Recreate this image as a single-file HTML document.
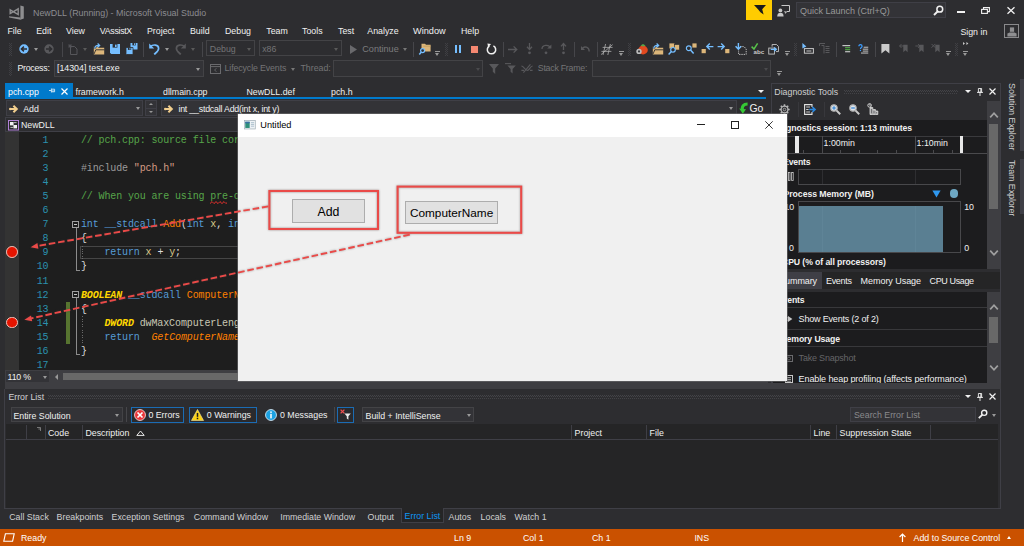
<!DOCTYPE html>
<html>
<head>
<meta charset="utf-8">
<title>NewDLL (Running) - Microsoft Visual Studio</title>
<style>
*{box-sizing:border-box;margin:0;padding:0}
html,body{width:1024px;height:546px;overflow:hidden;background:#2d2d30}
body{position:relative;font-family:"Liberation Sans",sans-serif;font-size:8.8px;line-height:12px;color:#f1f1f1}
.a{position:absolute}
.t{position:absolute;white-space:nowrap;line-height:12px;height:12px}
.g{color:#999}
.d{color:#6a6a6a}
.b{font-weight:bold}
.sep{position:absolute;width:1px;background:#46464a}
.grip{position:absolute;width:3px;opacity:.85;background:repeating-linear-gradient(#434347 0 1px,transparent 1px 2px) 0 0/1px 100% no-repeat,repeating-linear-gradient(transparent 0 1px,#434347 1px 2px) 1px 0/1px 100% no-repeat,repeating-linear-gradient(#434347 0 1px,transparent 1px 2px) 2px 0/1px 100% no-repeat}
.cb{position:absolute;background:#333337;border:1px solid #434346}
.cbd{position:absolute;background:#2d2d30;border:1px solid #434346}
.dd{position:absolute;width:0;height:0;border-left:2.5px solid transparent;border-right:2.5px solid transparent;border-top:3px solid #999}
.ddd{border-top-color:#5a5a5a}
.ddw{border-top-color:#f1f1f1;border-left-width:3px;border-right-width:3px;border-top-width:3.4px}
svg{position:absolute;overflow:visible}
.mono{font-family:"Liberation Mono",monospace;font-size:10px;letter-spacing:-0.12px;line-height:14.03px;white-space:pre;position:absolute}
.ln{color:#2b91af;text-align:right;width:30px;left:18.5px}
.cm{color:#57a64a}.kw{color:#569cd6}.st{color:#d69d85}.pp{color:#9b9b9b}.id{color:#dcdcdc}.fn{color:#ff8000}.ty{color:#ffd700;font-style:italic}.lv{color:#d7c88a}.fi{color:#ff8000;font-style:italic}
</style>
</head>
<body>

<!-- ================= TITLE BAR ================= -->
<div id="titlebar">
<svg style="left:9px;top:5px" width="15" height="15" viewBox="0 0 15 15"><path d="M11.4 0.4 L14.8 1.6 V13.4 L11.4 14.8 Z" fill="#8e8e90"/><path d="M0 11.2 L11.6 12.4 V14.8 L0.2 12.4 Z" fill="#8e8e90"/><path d="M1.2 4.8 L9.2 9.6 V3.8 L1.2 8.6 Z" fill="none" stroke="#8e8e90" stroke-width="1.4" stroke-linejoin="miter"/></svg>
<span class="t" style="left:33px;top:7.4px;font-size:8.9px;color:#8c8c90">NewDLL (Running) - Microsoft Visual Studio</span>
<div class="a" style="left:746px;top:0;width:26px;height:19.5px;background:#ffcc00"></div>
<svg style="left:753.5px;top:5px" width="12" height="10" viewBox="0 0 12 10"><path d="M0 0 H12 L8.2 4.2 L9.6 9.6 L6.4 7.2 L4.2 4.6 Z" fill="#1b1b1c"/></svg>
<svg style="left:777px;top:5px" width="13" height="12" viewBox="0 0 13 12"><path d="M4.5 0.5 H12.5 V6.5 H10 L8.3 8.2 V6.5 H7.5" fill="none" stroke="#c8c8c8" stroke-width="1"/><circle cx="3.4" cy="5.4" r="1.9" fill="#c8c8c8"/><path d="M0.2 11.5 C0.2 8.6 1.6 7.8 3.4 7.8 C5.2 7.8 6.6 8.6 6.6 11.5 Z" fill="#c8c8c8"/></svg>
<div class="a" style="left:796px;top:1.5px;width:150px;height:16px;background:#333337;border:1px solid #3f3f46"></div>
<span class="t g" style="left:800px;top:4.8px;font-size:9px">Quick Launch (Ctrl+Q)</span>
<svg style="left:933px;top:4.5px" width="11" height="11" viewBox="0 0 11 11"><circle cx="6.8" cy="4.2" r="2.9" fill="none" stroke="#f1f1f1" stroke-width="1.5"/><path d="M4.8 6.3 L1 10" stroke="#f1f1f1" stroke-width="1.9"/></svg>
<div class="a" style="left:957px;top:11.4px;width:7.5px;height:2px;background:#f1f1f1"></div>
<svg style="left:981px;top:7.4px" width="9" height="7" viewBox="0 0 9 7"><path d="M2.5 2 V0.6 H8.4 V4.6 H6.5" fill="none" stroke="#f1f1f1" stroke-width="1.1"/><rect x="0.6" y="2.4" width="5.8" height="4" fill="none" stroke="#f1f1f1" stroke-width="1.1"/></svg>
<svg style="left:1007px;top:7px" width="8" height="7" viewBox="0 0 8 7"><path d="M0.5 0.3 L7.5 6.7 M7.5 0.3 L0.5 6.7" stroke="#f1f1f1" stroke-width="1.3"/></svg>
</div>

<!-- ================= MENU ================= -->
<div id="menu">
<span class="t" style="left:7.5px;top:24.8px">File</span>
<span class="t" style="left:36.2px;top:24.8px">Edit</span>
<span class="t" style="left:66px;top:24.8px">View</span>
<span class="t" style="left:99.8px;top:24.8px;letter-spacing:-0.3px">VAssistX</span>
<span class="t" style="left:147px;top:24.8px">Project</span>
<span class="t" style="left:190px;top:24.8px">Build</span>
<span class="t" style="left:225px;top:24.8px">Debug</span>
<span class="t" style="left:266.3px;top:24.8px">Team</span>
<span class="t" style="left:302px;top:24.8px">Tools</span>
<span class="t" style="left:338px;top:24.8px">Test</span>
<span class="t" style="left:367.3px;top:24.8px">Analyze</span>
<span class="t" style="left:413px;top:24.8px;font-size:9.2px">Window</span>
<span class="t" style="left:461px;top:24.8px">Help</span>
<span class="t" style="left:960.4px;top:25.5px">Sign in</span>
<div class="a" style="left:1004px;top:24px;width:15px;height:14px;border:1px solid #8a8a8c;background:#2d2d30"></div>
<svg style="left:1006.5px;top:26.5px" width="10" height="10" viewBox="0 0 10 10"><rect x="2.9" y="0.4" width="4.2" height="4.4" fill="#8f8f91"/><path d="M0.4 9.6 V6.4 L2.6 5.4 H7.4 L9.6 6.4 V9.6 Z" fill="#8f8f91"/></svg>
</div>

<!-- ================= TOOLBAR ROW 1 ================= -->
<div id="tb1" class="a" style="left:0;top:0.8px;width:1024px;height:0">
<div class="grip" style="left:8.6px;top:42px;height:13px"></div>
<!-- back -->
<svg style="left:19px;top:43.2px" width="10" height="10" viewBox="0 0 10 10"><circle cx="5" cy="5" r="4.7" fill="#75beff"/><path d="M8 5 H2.8 M4.9 2.6 L2.4 5 L4.9 7.4" stroke="#2d2d30" stroke-width="1.5" fill="none"/></svg>
<div class="dd" style="left:34px;top:47.5px"></div>
<svg style="left:44.4px;top:43.2px" width="10" height="10" viewBox="0 0 10 10"><circle cx="5" cy="5" r="4.7" fill="#58585b"/><path d="M2 5 H7.2 M5.1 2.6 L7.6 5 L5.1 7.4" stroke="#2d2d30" stroke-width="1.5" fill="none"/></svg>
<div class="sep" style="left:61.5px;top:41px;height:15px"></div>
<!-- new item (disabled) -->
<svg style="left:67.5px;top:43px" width="10" height="11" viewBox="0 0 10 11"><path d="M2.5 2.5 H6.5 L9 5 V10.5 H2.5 Z" fill="none" stroke="#56565a" stroke-width="1"/><path d="M2 0 V4 M0 2 H4 M0.6 0.6 L3.4 3.4 M3.4 0.6 L0.6 3.4" stroke="#56565a" stroke-width="0.8"/></svg>
<div class="dd ddd" style="left:82.5px;top:47.5px"></div>
<!-- open folder -->
<svg style="left:92.5px;top:42px" width="12" height="12" viewBox="0 0 12 12"><path d="M0.8 3.6 H4.4 L5.4 4.8 H11.2 V11.4 H0.8 Z" fill="#dcb67a"/><path d="M1 11 L2.8 6.8 H11.4" fill="none" stroke="#2d2d30" stroke-width="0.9"/><path d="M1.8 5.6 C1.8 3 3.6 2.2 6 2.4" stroke="#2d2d30" stroke-width="2.6" fill="none"/><path d="M1.8 5.6 C1.8 3 3.6 2.2 6 2.4 M4.6 0.6 L6.6 2.4 L4.6 4.2" stroke="#75beff" stroke-width="1.3" fill="none"/></svg>
<!-- save -->
<svg style="left:110px;top:43.2px" width="10" height="10" viewBox="0 0 10 10"><path d="M0 0 H10 V10 H1.2 L0 8.8 Z" fill="#75beff"/><rect x="2.6" y="0" width="4.8" height="3.6" fill="#2d2d30"/><rect x="5" y="0.6" width="1.6" height="2.4" fill="#75beff"/></svg>
<!-- save all -->
<svg style="left:125.8px;top:42.3px" width="11.5" height="11.5" viewBox="0 0 11.5 11.5"><path d="M4.5 0 H11.5 V6.5 H5.3 L4.5 5.7 Z" fill="#75beff"/><rect x="6.4" y="0" width="3.3" height="2.4" fill="#2d2d30"/><rect x="8" y="0.3" width="1" height="1.6" fill="#75beff"/><path d="M0 4.5 H7 V11.5 H0.8 L0 10.7 Z" fill="#75beff" stroke="#2d2d30" stroke-width="0.8"/><rect x="1.9" y="4.5" width="3.3" height="2.4" fill="#2d2d30"/><rect x="3.5" y="4.9" width="1" height="1.6" fill="#75beff"/></svg>
<div class="sep" style="left:142.5px;top:41px;height:15px"></div>
<!-- undo -->
<svg style="left:148.5px;top:42.5px" width="11" height="12" viewBox="0 0 11 12"><path d="M1.4 3.6 C4 1.2 9.6 1.4 9.6 5.4 C9.6 8 7 9.6 5.2 11.4" fill="none" stroke="#75beff" stroke-width="1.7"/><path d="M0.2 0.4 V5.4 H5.2 Z" fill="#75beff"/></svg>
<div class="dd" style="left:164.5px;top:47.5px"></div>
<svg style="left:175px;top:42.5px" width="11" height="12" viewBox="0 0 11 12"><path d="M9.6 3.6 C7 1.2 1.4 1.4 1.4 5.4 C1.4 8 4 9.6 5.8 11.4" fill="none" stroke="#58585b" stroke-width="1.7"/><path d="M10.8 0.4 V5.4 H5.8 Z" fill="#58585b"/></svg>
<div class="dd ddd" style="left:190.5px;top:47.5px"></div>
<div class="sep" style="left:202px;top:41px;height:15px"></div>
<div class="cbd" style="left:206px;top:39.7px;width:48.5px;height:16px"></div>
<span class="t d" style="left:209.8px;top:41.9px;color:#747476">Debug</span>
<div class="dd ddd" style="left:246.5px;top:47.5px"></div>
<div class="cbd" style="left:259px;top:39.7px;width:82.5px;height:16px"></div>
<span class="t d" style="left:262.2px;top:41.9px;color:#747476">x86</span>
<div class="dd ddd" style="left:333.5px;top:47.5px"></div>
<svg style="left:349.5px;top:44px" width="7" height="9" viewBox="0 0 7 9"><path d="M0 0 L7 4.5 L0 9 Z" fill="#69696c"/></svg>
<span class="t" style="left:362.3px;top:41.9px;color:#7c7c7e;font-size:9.1px">Continue</span>
<div class="dd ddd" style="left:402.8px;top:47.5px;border-top-color:#777"></div>
<div class="sep" style="left:413.3px;top:41px;height:15px"></div>
<!-- folder search -->
<svg style="left:418.5px;top:42.2px" width="12" height="12" viewBox="0 0 12 12"><path d="M2.5 0.8 H6 L7 1.8 H11.6 V8.6 H2.5 Z" fill="#dcb67a"/><path d="M4.2 3.2 H11.6" stroke="#c09a5c" stroke-width="0.8"/><circle cx="3.6" cy="7.6" r="2" fill="#2d2d30" stroke="#75beff" stroke-width="1.2"/><path d="M2.2 9.2 L0.3 11.5" stroke="#75beff" stroke-width="1.5"/></svg>
<div class="a" style="left:435px;top:50.6px;width:5px;height:1px;background:#999"></div><div class="dd" style="left:435px;top:52.6px"></div>
<div class="grip" style="left:444.8px;top:42px;height:13px"></div>
<!-- pause stop restart -->
<div class="a" style="left:455px;top:44.6px;width:2.2px;height:7.6px;background:#75beff"></div>
<div class="a" style="left:459px;top:44.6px;width:2.2px;height:7.6px;background:#75beff"></div>
<div class="a" style="left:471px;top:45.2px;width:7px;height:7px;background:#f48771"></div>
<svg style="left:485.5px;top:42.5px" width="11" height="12" viewBox="0 0 11 12"><path d="M3.4 3 A4.2 4.2 0 1 0 7.4 2.9" fill="none" stroke="#f1f1f1" stroke-width="1.5"/><path d="M1.4 0.6 L5 1 L2.2 4.4 Z" fill="#f1f1f1"/></svg>
<div class="sep" style="left:502.5px;top:41px;height:15px"></div>
<!-- step icons (disabled) -->
<svg style="left:508px;top:44px" width="10" height="9" viewBox="0 0 10 9"><path d="M0 4.5 H8.6 M5.6 1.4 L8.8 4.5 L5.6 7.6" stroke="#58585b" stroke-width="1.3" fill="none"/></svg>
<svg style="left:526.3px;top:42.5px" width="7" height="12" viewBox="0 0 7 12"><path d="M3.5 0 V6 M1 3.8 L3.5 6.6 L6 3.8" stroke="#58585b" stroke-width="1.3" fill="none"/><circle cx="3.5" cy="9.8" r="1.4" fill="#58585b"/></svg>
<svg style="left:540.5px;top:42.5px" width="11" height="12" viewBox="0 0 11 12"><path d="M1 6 C1 1.6 8 1 9.4 5" stroke="#58585b" stroke-width="1.3" fill="none"/><path d="M10.4 1.4 V5.6 H6.2 Z" fill="#58585b"/><circle cx="5" cy="9.8" r="1.4" fill="#58585b"/></svg>
<svg style="left:559.5px;top:42.5px" width="7" height="12" viewBox="0 0 7 12"><path d="M3.5 7 V1 M1 3.4 L3.5 0.6 L6 3.4" stroke="#58585b" stroke-width="1.3" fill="none"/><circle cx="3.5" cy="9.8" r="1.4" fill="#58585b"/></svg>
<div class="sep" style="left:574px;top:41px;height:15px"></div>
<svg style="left:580.5px;top:44.5px" width="9" height="8" viewBox="0 0 9 8"><path d="M1.6 3.4 C3 1 8.2 1.6 8.2 6.6" stroke="#58585b" stroke-width="1.3" fill="none"/><path d="M0 1 V5 H4 Z" fill="#58585b"/></svg>
<div class="sep" style="left:597.2px;top:41px;height:15px"></div>
<!-- hash icon -->
<svg style="left:601px;top:43px" width="12" height="11" viewBox="0 0 12 11"><path d="M4.6 0 L2 11 M9.4 0 L6.8 11 M1.6 3.4 H11.6 M0.4 7.4 H10.4 M0 10.6 L11.6 0.6" stroke="#b4b4b4" stroke-width="0.75" fill="none"/></svg>
<div class="a" style="left:618.7px;top:50.6px;width:5px;height:1px;background:#999"></div><div class="dd" style="left:618.7px;top:52.6px"></div>
<div class="grip" style="left:628.2px;top:42px;height:13px"></div>
<!-- tomato -->
<svg style="left:636px;top:42.2px" width="12" height="12" viewBox="0 0 12 12"><ellipse cx="7" cy="7" rx="4.8" ry="4.4" fill="#e2491f"/><path d="M4.5 2.6 L7 1 L9.6 2.4 L7.2 3.6 Z" fill="#57a64a"/><circle cx="3" cy="8.4" r="2.7" fill="#bdbdbd"/><circle cx="3" cy="8.4" r="1.1" fill="#3a3a3d"/></svg>
<!-- open folder 2 -->
<svg style="left:652.3px;top:42px" width="12" height="12" viewBox="0 0 12 12"><path d="M0.8 3.6 H4.4 L5.4 4.8 H11.2 V11.4 H0.8 Z" fill="#dcb67a"/><path d="M1 11 L2.8 6.8 H11.4" fill="none" stroke="#2d2d30" stroke-width="0.9"/><path d="M1.8 5.6 C1.8 3 3.6 2.2 6 2.4" stroke="#2d2d30" stroke-width="2.6" fill="none"/><path d="M1.8 5.6 C1.8 3 3.6 2.2 6 2.4 M4.6 0.6 L6.6 2.4 L4.6 4.2" stroke="#75beff" stroke-width="1.3" fill="none"/></svg>
<!-- find in files -->
<svg style="left:668px;top:42px" width="12" height="12" viewBox="0 0 12 12"><rect x="1.4" y="0.4" width="5" height="5" fill="#dcb67a"/><rect x="6.4" y="1.6" width="5" height="5.4" fill="#dcb67a" stroke="#2d2d30" stroke-width="0.6"/><circle cx="5" cy="6.8" r="2.3" fill="#2d2d30" stroke="#75beff" stroke-width="1.2"/><path d="M3.4 8.6 L0.6 11.6" stroke="#75beff" stroke-width="1.5"/></svg>
<!-- magnifier + square -->
<svg style="left:684.5px;top:42.6px" width="12" height="11" viewBox="0 0 12 11"><rect x="7.4" y="0.4" width="4.2" height="4.2" fill="#dcb67a"/><circle cx="3.8" cy="5.2" r="2.4" fill="none" stroke="#75beff" stroke-width="1.2"/><path d="M5.6 7 L8.6 10.4" stroke="#75beff" stroke-width="1.5"/></svg>
<!-- square + left arrow -->
<svg style="left:701px;top:42.4px" width="13" height="11" viewBox="0 0 13 11"><rect x="0.6" y="6" width="4.2" height="4.2" fill="#dcb67a"/><path d="M12.4 3.6 H6 M8.8 0.6 L5.8 3.6 L8.8 6.6" stroke="#75beff" stroke-width="1.4" fill="none"/></svg>
<!-- right arrow + square -->
<svg style="left:717.3px;top:42.4px" width="13" height="11" viewBox="0 0 13 11"><rect x="8.2" y="6" width="4.2" height="4.2" fill="#dcb67a"/><path d="M0.6 3.6 H7 M4.2 0.6 L7.2 3.6 L4.2 6.6" stroke="#75beff" stroke-width="1.4" fill="none"/></svg>
<!-- down arrow + dotted box -->
<svg style="left:734.5px;top:41.8px" width="12" height="12" viewBox="0 0 12 12"><path d="M5 3.6 H9 L11.2 6 V11.4 H3.6 V7.6" fill="none" stroke="#c8c8c8" stroke-width="0.9" stroke-dasharray="1.4 0.9"/><path d="M3.4 0 V6 M0.6 3.2 L3.4 6.2 L6.2 3.2" stroke="#75beff" stroke-width="1.4" fill="none"/></svg>
<!-- check abc -->
<svg style="left:750.5px;top:42px" width="13" height="12" viewBox="0 0 13 12"><path d="M0.6 3.6 L3 6 L6.6 0.4" stroke="#57c24a" stroke-width="1.5" fill="none"/><text x="2.6" y="11.4" font-family="Liberation Sans" font-size="6.2" font-weight="bold" fill="#c8c8c8">abc</text></svg>
<!-- copy arrow -->
<svg style="left:767.6px;top:42.8px" width="11.6" height="10.6" viewBox="0 0 13 12"><path d="M4.6 3 V0.6 H9.6 L11.8 2.8 V8.6 H9" fill="none" stroke="#c8c8c8" stroke-width="1"/><rect x="0.8" y="4.6" width="6.4" height="6.8" fill="none" stroke="#c8c8c8" stroke-width="1"/><path d="M3 6 H9.2 M7 3.8 L9.4 6 L7 8.2" stroke="#75beff" stroke-width="1.4" fill="none"/></svg>
<div class="a" style="left:784.5px;top:50.6px;width:5px;height:1px;background:#999"></div><div class="dd" style="left:784.5px;top:52.6px"></div>
<div class="grip" style="left:793.6px;top:42px;height:13px"></div>
<!-- toggle comment group -->
<svg style="left:802px;top:42.6px" width="12" height="11" viewBox="0 0 12 11"><path d="M0.4 0 L4.4 3.4 L0.4 5.6 Z" fill="#75beff"/><rect x="2.4" y="5.6" width="9" height="4.6" fill="none" stroke="#c8c8c8" stroke-width="1"/><path d="M4.4 8 H9.4" stroke="#c8c8c8" stroke-width="1"/></svg>
<svg style="left:819px;top:42.6px" width="11" height="11" viewBox="0 0 11 11"><path d="M0.5 3 V0.5 H6 M2.5 2.5 H5 V10.5 M6.5 3.5 H10.5 M6.5 5.5 H10.5 M6.5 7.5 H10.5 M6.5 9.5 H10.5" fill="none" stroke="#58585b" stroke-width="1"/></svg>
<div class="sep" style="left:835.5px;top:41px;height:15px"></div>
<svg style="left:842px;top:44px" width="8.6" height="7.6" viewBox="0 0 10 9"><path d="M0.4 0.8 H9.6" stroke="#f1f1f1" stroke-width="1.1"/><path d="M3.6 3.2 H9.6 M3.6 5.6 H9.6" stroke="#57c24a" stroke-width="1.1"/><path d="M3.6 8 H9.6" stroke="#f1f1f1" stroke-width="1.1"/></svg>
<svg style="left:857.8px;top:42.8px" width="10.6" height="9.8" viewBox="0 0 12 11"><path d="M1 2.4 C1 0.2 4.6 0.2 4.6 2.4 C4.6 4 2.8 3.8 2.8 5.6" fill="none" stroke="#3b9cff" stroke-width="1.4"/><rect x="2.1" y="6.6" width="1.4" height="1.4" fill="#3b9cff"/><path d="M6.4 3.6 H11.6 M5.4 5.8 H11.6 M5.4 8 H11.6 M3.4 10.2 H11.6" stroke="#c8c8c8" stroke-width="1.1"/></svg>
<div class="sep" style="left:874.6px;top:41px;height:15px"></div>
<svg style="left:880.5px;top:42.8px" width="8.8" height="9.8" viewBox="0 0 9 11"><path d="M0 0 H9 V10.6 L4.5 7 L0 10.6 Z" fill="#cacaca"/></svg>
<svg style="left:898.5px;top:42.4px" width="8.6" height="9.6" viewBox="0 0 10 11"><path d="M5 2 H10 V10.6 L7.5 8.4 L5 10.6 Z" fill="#58585b"/><path d="M6 3.4 H0.8 M2.8 1.2 L0.6 3.4 L2.8 5.6" stroke="#58585b" stroke-width="1.1" fill="none"/></svg>
<svg style="left:915px;top:42.4px" width="8.6" height="9.6" viewBox="0 0 10 11"><path d="M5 2 H10 V10.6 L7.5 8.4 L5 10.6 Z" fill="#58585b"/><path d="M0.4 3.4 H5.6 M3.6 1.2 L5.8 3.4 L3.6 5.6" stroke="#58585b" stroke-width="1.1" fill="none"/></svg>
<svg style="left:931.3px;top:42.4px" width="8.6" height="9.6" viewBox="0 0 10 11"><path d="M5 2 H10 V10.6 L7.5 8.4 L5 10.6 Z" fill="#58585b"/><path d="M0.6 1 L5 5.4 M5 1 L0.6 5.4" stroke="#58585b" stroke-width="1.1" fill="none"/></svg>
<div class="a" style="left:946px;top:50.6px;width:5px;height:1px;background:#999"></div><div class="dd" style="left:946px;top:52.6px"></div>
<div class="grip" style="left:955.1px;top:42px;height:13px"></div>
<svg style="left:963px;top:41px" width="6" height="3" viewBox="0 0 6 3"><path d="M0 0 L2 1.5 L0 3 Z M3.4 0 L5.4 1.5 L3.4 3 Z" fill="#c8c8c8"/></svg>
<div class="a" style="left:962.9px;top:50.6px;width:5px;height:1px;background:#999"></div><div class="dd" style="left:962.9px;top:52.6px"></div>
</div>

<!-- ================= TOOLBAR ROW 2 ================= -->
<div id="tb2">
<div class="grip" style="left:8.6px;top:62px;height:14px"></div>
<span class="t" style="left:17.4px;top:62.2px;letter-spacing:-0.25px">Process:</span>
<div class="cb" style="left:54.3px;top:60px;width:149.3px;height:16.5px"></div>
<span class="t" style="left:57px;top:62.2px">[14304] test.exe</span>
<div class="dd" style="left:196px;top:67.6px"></div>
<svg style="left:210px;top:63.5px" width="11" height="10" viewBox="0 0 11 10"><rect x="0.5" y="0.5" width="10" height="9" fill="none" stroke="#6a6a6d" stroke-width="1"/><path d="M0.5 2.6 H10.5" stroke="#6a6a6d" stroke-width="1"/><path d="M6.4 4.2 L4.6 6 L6.4 7.8" stroke="#6a6a6d" stroke-width="0.9" fill="none"/></svg>
<span class="t" style="left:224.6px;top:62.2px;color:#747476;letter-spacing:-0.12px">Lifecycle Events</span>
<div class="dd ddd" style="left:290.5px;top:67.6px;border-top-color:#777"></div>
<span class="t" style="left:300.5px;top:62.2px;color:#747476">Thread:</span>
<div class="cb" style="left:333.3px;top:60px;width:149.7px;height:16.5px;background:#303033"></div>
<div class="dd ddd" style="left:475.5px;top:67.6px;border-top-color:#4a4a4d"></div>
<svg style="left:488.5px;top:63.5px" width="10" height="10" viewBox="0 0 10 10"><path d="M0 0 H10 L6.2 4.4 V10 L3.8 7.8 V4.4 Z" fill="#58585b"/></svg>
<svg style="left:505px;top:63px" width="11" height="11" viewBox="0 0 11 11"><path d="M2.4 2.6 H10.8 L7.6 6 V10.6 L5.6 8.8 V6 Z" fill="#58585b"/><path d="M0 0.6 H6" stroke="#58585b" stroke-width="1.1"/></svg>
<svg style="left:521px;top:64px" width="12" height="9" viewBox="0 0 12 9"><path d="M0.4 2 C3 2 3.6 6.4 6.4 6.4 C8.6 6.4 9 2 11.6 2 M0.4 6.4 H3 M9 6.4 H11.6 M2.4 8.6 L9.4 0.4" stroke="#58585b" stroke-width="1.1" fill="none"/></svg>
<span class="t" style="left:537.8px;top:62.2px;color:#747476;letter-spacing:-0.25px">Stack Frame:</span>
<div class="cb" style="left:592.4px;top:60px;width:179.1px;height:16.5px;background:#303033"></div>
<div class="dd ddd" style="left:764px;top:67.6px;border-top-color:#4a4a4d"></div>
<div class="a" style="left:776.8px;top:70.6px;width:5px;height:1px;background:#999"></div><div class="dd" style="left:776.8px;top:72.6px"></div>
</div>

<!--TOOLBARS_END-->

<!-- ================= DOC TABS ================= -->
<div id="tabs">
<div class="a" style="left:5px;top:83.2px;width:67.5px;height:15px;background:#007acc"></div>
<span class="t" style="left:8px;top:85.7px;color:#fff">pch.cpp</span>
<svg style="left:49px;top:88px" width="6" height="6" viewBox="0 0 6 6"><path d="M2.4 0.6 V4.4 M2.4 1.2 H5.6 V3.8 H2.4 M2.4 3 H5.6 M0 2.5 H2.4" stroke="#d0e6f5" stroke-width="0.9" fill="none"/></svg>
<svg style="left:61px;top:88px" width="7" height="7" viewBox="0 0 7 7"><path d="M0.5 0.5 L6.5 6.5 M6.5 0.5 L0.5 6.5" stroke="#fff" stroke-width="1.2"/></svg>
<span class="t" style="left:75.5px;top:85.7px">framework.h</span>
<span class="t" style="left:163px;top:85.7px">dllmain.cpp</span>
<span class="t" style="left:246.5px;top:85.7px">NewDLL.def</span>
<span class="t" style="left:331px;top:85.7px">pch.h</span>
<div class="dd ddw" style="left:758.3px;top:90px"></div>
<div class="a" style="left:5px;top:97.4px;width:761px;height:1.9px;background:#007acc"></div>
</div>

<!-- ================= NAV BAR ================= -->
<div id="nav">
<div class="cb" style="left:6px;top:100.3px;width:137px;height:15.7px;border-color:#3f3f46"></div>
<svg style="left:8.5px;top:104.6px" width="9" height="8" viewBox="0 0 9 8"><circle cx="1.2" cy="4" r="1.2" fill="#f2cf8e"/><path d="M1 4 H7 M4.4 0.8 L7.8 4 L4.4 7.2" stroke="#f2cf8e" stroke-width="2" fill="none"/></svg>
<span class="t" style="left:23.2px;top:102.8px">Add</span>
<div class="dd" style="left:136px;top:107.4px"></div>
<div class="cb" style="left:145px;top:100.3px;width:12px;height:15.7px;border-color:#3f3f46"></div>
<div class="a" style="left:145px;top:107.8px;width:12px;height:1px;background:#3f3f46"></div><div class="a" style="left:148.8px;top:103.4px;width:0;height:0;border-left:2.2px solid transparent;border-right:2.2px solid transparent;border-bottom:2.6px solid #999"></div>
<div class="a" style="left:148.8px;top:110.6px;width:0;height:0;border-left:2.2px solid transparent;border-right:2.2px solid transparent;border-top:2.6px solid #999"></div>
<div class="cb" style="left:160.5px;top:100.3px;width:576px;height:15.7px;border-color:#3f3f46"></div>
<svg style="left:164px;top:104.6px" width="9" height="8" viewBox="0 0 9 8"><circle cx="1.2" cy="4" r="1.2" fill="#f2cf8e"/><path d="M1 4 H7 M4.4 0.8 L7.8 4 L4.4 7.2" stroke="#f2cf8e" stroke-width="2" fill="none"/></svg>
<span class="t" style="left:178.4px;top:102.8px;letter-spacing:-0.2px">int __stdcall Add(int x, int y)</span>
<div class="dd" style="left:729px;top:107.4px"></div>
<svg style="left:739.4px;top:102.4px" width="10" height="12" viewBox="0 0 10 12"><path d="M8.6 2 C4.4 2 2.6 4.6 3.4 8" stroke="#35c935" stroke-width="3.2" fill="none"/><path d="M0.2 6.4 L7 7.2 L3.8 11.8 Z" fill="#35c935"/></svg>
<span class="t" style="left:749.4px;top:102.8px;font-size:10.4px">Go</span>
</div>

<!--TABS_END-->

<!-- ================= EDITOR ================= -->
<div id="editor">
<div class="a" style="left:5px;top:117px;width:763px;height:15.4px;background:#2d2d30;border:1px solid #3f3f46"></div>
<svg style="left:7.7px;top:120px" width="11" height="10.5" viewBox="0 0 11 10.5"><rect x="0.5" y="0.5" width="10" height="9.5" fill="#2a2a2d" stroke="#b180d7" stroke-width="1"/><rect x="2" y="2" width="3.6" height="3.4" fill="#f1f1f1"/><rect x="5.4" y="5" width="3.6" height="3.4" fill="#f1f1f1"/><path d="M6 2.6 H8.6 M2.4 7.4 H5" stroke="#c8c8c8" stroke-width="0.9"/></svg>
<span class="t" style="left:21px;top:118.9px">NewDLL</span>
<div class="a" style="left:5px;top:132.4px;width:14px;height:237.6px;background:#333333"></div>
<div class="a" style="left:19px;top:132.4px;width:749px;height:237.6px;background:#1e1e1e"></div>
<div class="a" style="left:79.6px;top:246.4px;width:689px;height:13px;border:1px solid #464646"></div>
<div class="a" style="left:65.6px;top:301.7px;width:4.2px;height:42.1px;background:#577430"></div>
<div class="mono ln" style="top:134.20px">1</div>
<div class="mono ln" style="top:148.23px">2</div>
<div class="mono ln" style="top:162.26px">3</div>
<div class="mono ln" style="top:176.29px">4</div>
<div class="mono ln" style="top:190.32px">5</div>
<div class="mono ln" style="top:204.35px">6</div>
<div class="mono ln" style="top:218.38px">7</div>
<div class="mono ln" style="top:232.41px">8</div>
<div class="mono ln" style="top:246.44px">9</div>
<div class="mono ln" style="top:260.47px">10</div>
<div class="mono ln" style="top:274.50px">11</div>
<div class="mono ln" style="top:288.53px">12</div>
<div class="mono ln" style="top:302.56px">13</div>
<div class="mono ln" style="top:316.59px">14</div>
<div class="mono ln" style="top:330.62px">15</div>
<div class="mono ln" style="top:344.65px">16</div>
<div class="mono ln" style="top:358.68px">17</div>
<div class="mono" style="left:80.9px;top:134.20px"><span class="cm">// pch.cpp: source file corresponding to the pre-compiled header</span></div>
<div class="mono" style="left:80.9px;top:162.26px"><span class="pp">#include </span><span class="st">"pch.h"</span></div>
<div class="mono" style="left:80.9px;top:190.32px"><span class="cm">// When you are using pre-compiled headers, this source file is necessary for compilation to succeed.</span></div>
<div class="mono" style="left:80.9px;top:218.38px"><span class="kw">int</span> <span class="kw">__stdcall</span> <span class="fn">Add</span><span class="id">(</span><span class="kw">int</span> <span class="lv">x</span><span class="id">,</span> <span class="kw">int</span> <span class="lv">y</span><span class="id">)</span></div>
<div class="mono" style="left:80.9px;top:232.41px"><span class="id">{</span></div>
<div class="mono" style="left:80.9px;top:246.44px">    <span class="kw">return</span> <span class="lv">x</span> <span class="id">+</span> <span class="lv">y</span><span class="id">;</span></div>
<div class="mono" style="left:80.9px;top:260.47px"><span class="id">}</span></div>
<div class="mono" style="left:80.9px;top:288.53px"><span class="ty b">BOOLEAN</span> <span class="kw">__stdcall</span> <span class="fn">ComputerName</span><span class="id">(</span><span class="kw">char</span><span class="id">* </span><span class="lv">buffer</span><span class="id">)</span></div>
<div class="mono" style="left:80.9px;top:302.56px"><span class="id">{</span></div>
<div class="mono" style="left:80.9px;top:316.59px">    <span class="ty b">DWORD</span> <span class="id" style="color:#c8c8b4">dwMaxComputerLength</span> <span class="id">= MAX_COMPUTERNAME_LENGTH + 1;</span></div>
<div class="mono" style="left:80.9px;top:330.62px">    <span class="kw">return</span>  <span class="fi">GetComputerName</span><span class="id">(</span><span class="lv">buffer</span><span class="id">, &amp;dwMaxComputerLength);</span></div>
<div class="mono" style="left:80.9px;top:344.65px"><span class="id">}</span></div>
<div class="a" style="left:72.2px;top:220.9px;width:7px;height:7px;border:1px solid #a0a0a0;background:#1e1e1e"></div>
<div class="a" style="left:73.9px;top:223.9px;width:3.6px;height:1px;background:#c8c8c8"></div>
<div class="a" style="left:75.6px;top:227.9px;width:1px;height:42.4px;background:#8c8c8c"></div>
<div class="a" style="left:75.6px;top:270.3px;width:4px;height:1px;background:#8c8c8c"></div>
<div class="a" style="left:72.2px;top:291.0px;width:7px;height:7px;border:1px solid #a0a0a0;background:#1e1e1e"></div>
<div class="a" style="left:73.9px;top:294.0px;width:3.6px;height:1px;background:#c8c8c8"></div>
<div class="a" style="left:75.6px;top:298.0px;width:1px;height:56.4px;background:#8c8c8c"></div>
<div class="a" style="left:75.6px;top:354.4px;width:4px;height:1px;background:#8c8c8c"></div>
<div class="a" style="left:82px;top:245.7px;width:1px;height:13.0px;background:repeating-linear-gradient(#6a6a6a 0 1px,transparent 1px 2.5px)"></div>
<div class="a" style="left:82px;top:315.9px;width:1px;height:13.0px;background:repeating-linear-gradient(#6a6a6a 0 1px,transparent 1px 2.5px)"></div>
<div class="a" style="left:82px;top:329.9px;width:1px;height:13.0px;background:repeating-linear-gradient(#6a6a6a 0 1px,transparent 1px 2.5px)"></div>
<svg style="left:210px;top:201.2px" width="17" height="3.4" viewBox="0 0 17 3.4"><path d="M0 2.6 L2 0.6 L4 2.6 L6 0.6 L8 2.6 L10 0.6 L12 2.6 L14 0.6 L16 2.6 L17 1.6" stroke="#e8302c" stroke-width="1" fill="none"/></svg>
<div class="a" style="left:5.8px;top:246.4px;width:11.8px;height:11.8px;border-radius:50%;background:#e51400;border:1px solid #f4c4bc"></div>
<div class="a" style="left:5.8px;top:316.6px;width:11.8px;height:11.8px;border-radius:50%;background:#e51400;border:1px solid #f4c4bc"></div>
<div class="a" style="left:5px;top:370px;width:763px;height:13px;background:#3e3e42"></div>
<div class="a" style="left:6.2px;top:371px;width:42.8px;height:10.6px;background:#333337"></div>
<span class="t" style="left:7.6px;top:371px;letter-spacing:-0.2px">110 %</span>
<div class="dd" style="left:43px;top:376px"></div>
<div class="a" style="left:54.6px;top:374px;width:0;height:0;border-top:3px solid transparent;border-bottom:3px solid transparent;border-right:3.4px solid #999"></div>
<div class="a" style="left:62.5px;top:373px;width:400px;height:7px;background:#686868"></div>
</div>
<!--EDITOR_END-->

<!-- ================= DIAGNOSTIC TOOLS ================= -->
<div id="diag">
<div class="a" style="left:770.6px;top:83.2px;width:230px;height:300.2px;background:#2d2d30;border:1px solid #3f3f46"></div>
<span class="t" style="left:774.3px;top:85.6px;color:#d0d0d0">Diagnostic Tools</span>
<div class="a" style="left:844px;top:89.6px;width:114px;height:4px;background:repeating-linear-gradient(90deg,#434347 0 1px,transparent 1px 2px) 0 0/100% 1px no-repeat,repeating-linear-gradient(90deg,transparent 0 1px,#434347 1px 2px) 0 1.5px/100% 1px no-repeat,repeating-linear-gradient(90deg,#434347 0 1px,transparent 1px 2px) 0 3px/100% 1px no-repeat"></div>
<div class="dd ddw" style="left:964.5px;top:90.4px"></div>
<svg style="left:976.5px;top:87.5px" width="6" height="8" viewBox="0 0 6 8"><path d="M1.4 0.5 H4.6 V4.2 H1.4 Z M3.8 0.5 V4.2 M0 4.4 H6 M3 4.4 V8" stroke="#f1f1f1" stroke-width="0.9" fill="none"/></svg>
<svg style="left:988.5px;top:88px" width="7" height="7" viewBox="0 0 7 7"><path d="M0.5 0.5 L6.5 6.5 M6.5 0.5 L0.5 6.5" stroke="#f1f1f1" stroke-width="1.2"/></svg>
<!-- toolbar -->
<svg style="left:779.2px;top:103.8px" width="11" height="11" viewBox="0 0 11 11"><circle cx="5.5" cy="5.5" r="3.4" fill="none" stroke="#b4b4b4" stroke-width="1.3"/><circle cx="5.5" cy="5.5" r="1.3" fill="none" stroke="#b4b4b4" stroke-width="0.8"/><path d="M5.5 0.3 V2 M5.5 9 V10.7 M0.3 5.5 H2 M9 5.5 H10.7 M1.8 1.8 L3 3 M8 8 L9.2 9.2 M9.2 1.8 L8 3 M3 8 L1.8 9.2" stroke="#b4b4b4" stroke-width="1.6"/></svg>
<div class="sep" style="left:798.2px;top:102px;height:15px;background:#38383c"></div>
<svg style="left:804.4px;top:103.6px" width="12" height="11" viewBox="0 0 12 11"><path d="M8 3 V0.6 H0.6 V10.4 H8 V8" fill="none" stroke="#e0e0e0" stroke-width="1.1"/><path d="M2.2 3 H6 M2.2 5.5 H4.6 M2.2 8 H6" stroke="#e0e0e0" stroke-width="0.9"/><path d="M5.2 5.5 H10.6 M8.4 3 L11 5.5 L8.4 8" stroke="#2a86dc" stroke-width="1.7" fill="none"/></svg>
<div class="sep" style="left:824.2px;top:102px;height:15px;background:#38383c"></div>
<svg style="left:829.6px;top:103.6px" width="11" height="11" viewBox="0 0 11 11"><circle cx="4" cy="4" r="3.2" fill="#dde3ea" stroke="#b4b4b4" stroke-width="1.2"/><path d="M2.2 4 H5.8 M4 2.2 V5.8" stroke="#2a7fd4" stroke-width="1.2"/><path d="M6.4 6.4 L10.2 10.2" stroke="#c8c8c8" stroke-width="2"/></svg>
<svg style="left:849.4px;top:103.6px" width="11" height="11" viewBox="0 0 11 11"><circle cx="4" cy="4" r="3.2" fill="#dde3ea" stroke="#b4b4b4" stroke-width="1.2"/><path d="M2.2 4 H5.8" stroke="#2a7fd4" stroke-width="1.2"/><path d="M6.4 6.4 L10.2 10.2" stroke="#c8c8c8" stroke-width="2"/></svg>
<svg style="left:867.4px;top:103.2px" width="11" height="12" viewBox="0 0 11 12"><path d="M3 11.5 V4.5 H5.8 V6.5 H8.4 V8 H10.8 V11.5 Z" fill="#bdbdbd" stroke="#d8d8d8" stroke-width="0.8"/><path d="M4.4 6 V10.4 M7 7.8 V10.4 M9.6 9.2 V10.4" stroke="#5a5a5e" stroke-width="0.9"/><path d="M5.8 6.5 V11.5 M8.4 8 V11.5" stroke="#8a8a8e" stroke-width="0.5"/><circle cx="2.6" cy="2.4" r="1.8" fill="none" stroke="#e0e0e0" stroke-width="0.9"/><path d="M2.6 1 V2.4 H3.8" stroke="#e0e0e0" stroke-width="0.6" fill="none"/></svg>
<!-- upper scroll content -->
<div class="a" style="left:773px;top:120px;width:215px;height:148.6px;background:#1c1c1e"></div>
<span class="t b" style="right:112px;top:122.2px;font-size:8.7px;letter-spacing:-0.1px">Diagnostics session: 1:13 minutes</span>
<div class="a" style="left:773px;top:135.6px;width:215px;height:1px;background:#3a3a3d"></div>
<div class="a" style="left:773px;top:152.6px;width:215px;height:1px;background:#4a4a4d"></div>
<div class="a" style="left:795.2px;top:136.4px;width:3.6px;height:16.4px;background:#e8e8e8"></div>
<div class="a" style="left:959.6px;top:136.4px;width:3.6px;height:16.4px;background:#e8e8e8"></div>
<div class="a" style="left:822px;top:136.4px;width:1px;height:16.4px;background:#4a4a4d"></div>
<div class="a" style="left:915px;top:136.4px;width:1px;height:16.4px;background:#4a4a4d"></div>
<div class="a" style="left:803.4px;top:150px;width:150px;height:2.6px;background:repeating-linear-gradient(90deg,#4a4a4d 0 1px,transparent 1px 18.6px)"></div>
<span class="t" style="left:823.6px;top:137.2px">1:00min</span>
<span class="t" style="left:916.6px;top:137.2px">1:10min</span>
<span class="t b" style="right:213.6px;top:156px;font-size:8.7px;letter-spacing:-0.2px">Events</span>
<svg style="left:787.6px;top:172px" width="6" height="9" viewBox="0 0 6 9"><rect x="0.4" y="0.4" width="1.6" height="8" fill="none" stroke="#c8c8c8" stroke-width="0.8"/><rect x="3.6" y="0.4" width="1.6" height="8" fill="none" stroke="#c8c8c8" stroke-width="0.8"/></svg>
<div class="a" style="left:798px;top:169px;width:162.6px;height:16.4px;border:1px solid #48484b"></div>
<div class="a" style="left:822px;top:170px;width:1px;height:14.4px;background:#2e2e31"></div>
<div class="a" style="left:915px;top:170px;width:1px;height:14.4px;background:#2e2e31"></div>
<span class="t b" style="right:150.2px;top:188.2px;font-size:8.7px;letter-spacing:-0.05px">Process Memory (MB)</span>
<svg style="left:931.6px;top:189.6px" width="9" height="8" viewBox="0 0 9 8"><path d="M0.4 0.6 H8.6 L4.5 7.6 Z" fill="#2f98f0"/></svg>
<div class="a" style="left:949.8px;top:189.4px;width:8.6px;height:8.6px;border-radius:50%;background:#6ea8c4"></div>
<div class="a" style="left:798px;top:201px;width:162.6px;height:52.4px;border:1px solid #48484b"></div>
<div class="a" style="left:799px;top:205.8px;width:143.6px;height:46.6px;background:#5a7f92"></div>
<div class="a" style="left:822px;top:205.8px;width:1px;height:46.6px;background:#5f8497"></div>
<div class="a" style="left:915px;top:205.8px;width:1px;height:46.6px;background:#5f8497"></div>
<span class="t" style="left:784.4px;top:201.4px">10</span>
<span class="t" style="left:789px;top:242px">0</span>
<span class="t" style="left:964.2px;top:201.4px">10</span>
<span class="t" style="left:964.2px;top:242px">0</span>
<span class="t b" style="right:138.3px;top:256px;font-size:8.7px;letter-spacing:-0.1px">CPU (% of all processors)</span>
<!-- upper scrollbar -->
<div class="a" style="left:987.4px;top:101px;width:12.4px;height:167.6px;background:#3e3e42"></div>
<svg style="left:990px;top:112px" width="8" height="6" viewBox="0 0 8 6"><path d="M0.2 5.4 L4 1.2 L7.8 5.4" stroke="#a0a0a0" stroke-width="1.7" fill="none"/></svg>
<div class="a" style="left:989.4px;top:124px;width:9px;height:85px;background:#686868"></div>
<svg style="left:990px;top:249.5px" width="8" height="6" viewBox="0 0 8 6"><path d="M0.2 0.6 L4 4.8 L7.8 0.6" stroke="#a0a0a0" stroke-width="1.7" fill="none"/></svg>
<!-- tab row -->
<div class="a" style="left:773px;top:272.4px;width:227px;height:16.6px;background:#252526"></div>
<div class="a" style="left:773px;top:272.4px;width:48.8px;height:16.6px;background:#3f3f46"></div>
<span class="t" style="right:207px;top:274.8px;font-size:9px;letter-spacing:-0.1px">Summary</span>
<span class="t" style="left:826px;top:274.8px;font-size:9px;letter-spacing:-0.32px">Events</span>
<span class="t" style="left:860.6px;top:274.8px;font-size:9px;letter-spacing:-0.05px">Memory Usage</span>
<span class="t" style="left:929.6px;top:274.8px;font-size:9px;letter-spacing:-0.38px">CPU Usage</span>
<!-- lower scroll content -->
<div class="a" style="left:773px;top:291.6px;width:215px;height:91.2px;background:#1c1c1e;overflow:hidden">
<span class="t" style="left:25.6px;top:81.6px;font-size:9px;letter-spacing:-0.1px">Enable heap profiling (affects performance)</span>
</div>
<span class="t b" style="right:219.6px;top:294.2px;font-size:8.7px;letter-spacing:-0.2px">Events</span>
<div class="a" style="left:773px;top:307.2px;width:215px;height:1px;background:#38383b"></div>
<svg style="left:785px;top:315.4px" width="8" height="8" viewBox="0 0 8 8"><path d="M0 2.4 H3 M0 4 H3 M0 5.6 H3" stroke="#c8c8c8" stroke-width="0.7"/><path d="M3 1 L7.4 4 L3 7 Z" fill="#c8c8c8"/></svg>
<span class="t" style="left:798.6px;top:313.2px;font-size:9px;letter-spacing:-0.18px">Show Events (2 of 2)</span>
<div class="a" style="left:773px;top:328.8px;width:215px;height:1px;background:#38383b"></div>
<span class="t b" style="right:184px;top:332.8px;font-size:8.7px;letter-spacing:-0.1px">Memory Usage</span>
<div class="a" style="left:773px;top:346px;width:215px;height:1px;background:#38383b"></div>
<svg style="left:785.4px;top:354px" width="8" height="8" viewBox="0 0 8 8"><rect x="0.5" y="1.5" width="7" height="6" fill="none" stroke="#6a6a6d" stroke-width="1"/><circle cx="4" cy="4.5" r="1.5" fill="none" stroke="#6a6a6d" stroke-width="0.8"/></svg>
<span class="t" style="left:798.6px;top:351.8px;font-size:9px;letter-spacing:-0.2px;color:#656568">Take Snapshot</span>
<svg style="left:785.4px;top:374.6px" width="8" height="8" viewBox="0 0 8 8"><rect x="0.5" y="0.5" width="7" height="7" fill="none" stroke="#c8c8c8" stroke-width="1"/><path d="M2 2.6 H6 M2 4.4 H6 M2 6.2 H6" stroke="#c8c8c8" stroke-width="0.8"/></svg>
<!-- lower scrollbar -->
<div class="a" style="left:987.4px;top:291.6px;width:12.4px;height:91.2px;background:#3e3e42"></div>
<svg style="left:990px;top:304px" width="8" height="6" viewBox="0 0 8 6"><path d="M0.2 5.4 L4 1.2 L7.8 5.4" stroke="#a0a0a0" stroke-width="1.7" fill="none"/></svg>
<div class="a" style="left:989.4px;top:316.6px;width:9px;height:26.6px;background:#686868"></div>
<svg style="left:990px;top:364.5px" width="8" height="6" viewBox="0 0 8 6"><path d="M0.2 0.6 L4 4.8 L7.8 0.6" stroke="#a0a0a0" stroke-width="1.7" fill="none"/></svg>
</div>

<!--DIAG_END-->

<!-- ================= RIGHT SIDEBAR ================= -->
<div id="side">
<div class="a" style="left:1020.2px;top:79px;width:4px;height:72px;background:#3f3f46"></div>
<div class="a" style="left:1020.2px;top:159px;width:4px;height:55.4px;background:#3f3f46"></div>
<span class="t" style="left:1017.8px;top:83.4px;transform-origin:0 0;transform:rotate(90deg);color:#d0d0d0;font-size:9px;letter-spacing:-0.06px">Solution Explorer</span>
<span class="t" style="left:1017.8px;top:160.4px;transform-origin:0 0;transform:rotate(90deg);color:#d0d0d0;font-size:9px;letter-spacing:-0.14px">Team Explorer</span>
</div>

<!--SIDEBAR_END-->

<!-- ================= ERROR LIST ================= -->
<div id="errlist">
<div class="a" style="left:4.6px;top:382.6px;width:996px;height:6.4px;background:#3e3e42"></div>
<div class="a" style="left:4.4px;top:389px;width:996.4px;height:119.6px;background:#2d2d30;border:1px solid #3f3f46;border-top:none"></div>
<span class="t" style="left:8.4px;top:391.2px;color:#d0d0d0">Error List</span>
<div class="a" style="left:48px;top:394.8px;width:912px;height:4px;background:repeating-linear-gradient(90deg,#434347 0 1px,transparent 1px 2px) 0 0/100% 1px no-repeat,repeating-linear-gradient(90deg,transparent 0 1px,#434347 1px 2px) 0 1.5px/100% 1px no-repeat,repeating-linear-gradient(90deg,#434347 0 1px,transparent 1px 2px) 0 3px/100% 1px no-repeat"></div>
<div class="dd ddw" style="left:964.5px;top:395.4px"></div>
<svg style="left:976.5px;top:392.6px" width="6" height="8" viewBox="0 0 6 8"><path d="M1.4 0.5 H4.6 V4.2 H1.4 Z M3.8 0.5 V4.2 M0 4.4 H6 M3 4.4 V8" stroke="#f1f1f1" stroke-width="0.9" fill="none"/></svg>
<svg style="left:988.5px;top:393px" width="7" height="7" viewBox="0 0 7 7"><path d="M0.5 0.5 L6.5 6.5 M6.5 0.5 L0.5 6.5" stroke="#f1f1f1" stroke-width="1.2"/></svg>
<!-- toolbar -->
<div class="cb" style="left:10.6px;top:407.4px;width:112px;height:14.8px"></div>
<span class="t" style="left:13.4px;top:409.5px">Entire Solution</span>
<div class="dd" style="left:115px;top:414px"></div>
<div class="sep" style="left:126px;top:407px;height:15px"></div>
<div class="a" style="left:130.8px;top:406.8px;width:53.4px;height:16px;border:1px solid #1b6cb4;background:#2a2a2d"></div>
<svg style="left:133.6px;top:408.8px" width="12" height="12" viewBox="0 0 11 11"><circle cx="5.5" cy="5.5" r="5" fill="#e8363a" stroke="#f8d8d8" stroke-width="0.8"/><path d="M3.2 3.2 L7.8 7.8 M7.8 3.2 L3.2 7.8" stroke="#fff" stroke-width="1.5"/></svg>
<span class="t" style="left:148.4px;top:408.8px">0 Errors</span>
<div class="a" style="left:189.4px;top:406.8px;width:67.8px;height:16px;border:1px solid #1b6cb4;background:#2a2a2d"></div>
<svg style="left:191.4px;top:408.6px" width="13" height="12" viewBox="0 0 12 11"><path d="M6 0.4 L11.6 10.6 H0.4 Z" fill="#fcd116" stroke="#fff3b0" stroke-width="0.5"/><path d="M6 3.6 V7.2" stroke="#1e1e1e" stroke-width="1.4"/><rect x="5.3" y="8" width="1.4" height="1.4" fill="#1e1e1e"/></svg>
<span class="t" style="left:206.8px;top:408.8px">0 Warnings</span>
<svg style="left:265px;top:408.8px" width="12" height="12" viewBox="0 0 11 11"><circle cx="5.5" cy="5.5" r="5" fill="#1ba1e2" stroke="#d8ecf8" stroke-width="0.8"/><rect x="4.8" y="2.2" width="1.4" height="1.4" fill="#fff"/><rect x="4.8" y="4.4" width="1.4" height="4.2" fill="#fff"/></svg>
<span class="t" style="left:280px;top:408.8px">0 Messages</span>
<div class="sep" style="left:334px;top:407px;height:15px"></div>
<div class="a" style="left:337.4px;top:406.8px;width:17px;height:16px;border:1px solid #1b6cb4;background:#2a2a2d"></div>
<svg style="left:340.4px;top:409.4px" width="11" height="11" viewBox="0 0 11 11"><path d="M0.6 0.6 L4.4 4.4 M4.4 0.6 L0.6 4.4" stroke="#f05050" stroke-width="1.3"/><path d="M4.4 4.6 H10.8 L8.4 7.2 V10.8 L6.8 9.6 V7.2 Z" fill="#e8e8e8"/></svg>
<div class="cb" style="left:362px;top:407.4px;width:112px;height:14.8px"></div>
<span class="t" style="left:365.6px;top:409.5px">Build + IntelliSense</span>
<div class="dd" style="left:466.6px;top:414px"></div>
<div class="cb" style="left:850px;top:407.4px;width:126px;height:14.8px;border-color:#3f3f46"></div>
<span class="t g" style="left:854px;top:409px;color:#8a8a8c">Search Error List</span>
<svg style="left:978.4px;top:409.4px" width="10" height="10" viewBox="0 0 10 10"><circle cx="6.2" cy="3.8" r="2.6" fill="none" stroke="#f1f1f1" stroke-width="1.4"/><path d="M4.4 5.6 L0.8 9.2" stroke="#f1f1f1" stroke-width="1.8"/></svg>
<div class="dd" style="left:992px;top:414px"></div>
<!-- column header + list -->
<div class="a" style="left:6.2px;top:424.4px;width:992px;height:83.8px;background:#252526"></div>
<div class="a" style="left:6.2px;top:424.4px;width:992px;height:16px;background:#252526;border-bottom:1px solid #3f3f46"></div>
<div class="sep" style="left:25.5px;top:425px;height:15px;background:#3f3f46"></div>
<div class="sep" style="left:45px;top:425px;height:15px;background:#3f3f46"></div>
<div class="sep" style="left:82px;top:425px;height:15px;background:#3f3f46"></div>
<div class="sep" style="left:571px;top:425px;height:15px;background:#3f3f46"></div>
<div class="sep" style="left:646px;top:425px;height:15px;background:#3f3f46"></div>
<div class="sep" style="left:810px;top:425px;height:15px;background:#3f3f46"></div>
<div class="sep" style="left:836px;top:425px;height:15px;background:#3f3f46"></div>
<div class="sep" style="left:930px;top:425px;height:15px;background:#3f3f46"></div>
<svg style="left:37.4px;top:427.4px" width="4" height="4" viewBox="0 0 4 4"><path d="M0 0.5 H3.5 V4 M1.4 2 H3.5" stroke="#8a8a8c" stroke-width="0.8" fill="none"/></svg>
<span class="t" style="left:48px;top:427.2px">Code</span>
<span class="t" style="left:85.4px;top:427px">Description</span>
<svg style="left:135.6px;top:429.6px" width="9" height="6" viewBox="0 0 9 6"><path d="M0.8 5.4 L4.5 1 L8.2 5.4 Z" fill="none" stroke="#e8e8e8" stroke-width="1"/></svg>
<span class="t" style="left:574.6px;top:427px">Project</span>
<span class="t" style="left:649.6px;top:427px">File</span>
<span class="t" style="left:813.6px;top:427px">Line</span>
<span class="t" style="left:839.6px;top:427px">Suppression State</span>
</div>

<!-- ================= BOTTOM TABS ================= -->
<div id="btabs">
<div class="a" style="left:401px;top:508.4px;width:42.6px;height:14.4px;background:#252526;border:1px solid #3f3f46;border-top:none"></div>
<span class="t" style="left:9.2px;top:510.6px;color:#d0d0d0">Call Stack</span>
<span class="t" style="left:56.6px;top:510.6px;color:#d0d0d0">Breakpoints</span>
<span class="t" style="left:111.6px;top:510.6px;color:#d0d0d0">Exception Settings</span>
<span class="t" style="left:193.8px;top:510.6px;color:#d0d0d0">Command Window</span>
<span class="t" style="left:280.2px;top:510.6px;color:#d0d0d0">Immediate Window</span>
<span class="t" style="left:367.6px;top:510.6px;color:#d0d0d0">Output</span>
<span class="t" style="left:404.6px;top:510.4px;color:#0e97f5">Error List</span>
<span class="t" style="left:448.6px;top:510.6px;color:#d0d0d0">Autos</span>
<span class="t" style="left:480.6px;top:510.6px;color:#d0d0d0">Locals</span>
<span class="t" style="left:514.6px;top:510.6px;color:#d0d0d0">Watch 1</span>
</div>

<!--ERRORLIST_END-->

<!-- ================= STATUS BAR ================= -->
<div id="status">
<div class="a" style="left:0;top:528.5px;width:1024px;height:17.5px;background:#ca5100"></div>
<svg style="left:3px;top:533px" width="12" height="9" viewBox="0 0 12 9"><path d="M2.4 0.8 H11.2 L9.6 8.2 H0.8 Z" fill="none" stroke="#fff" stroke-width="1.1"/></svg>
<span class="t" style="left:21px;top:531.6px;color:#fff">Ready</span>
<span class="t" style="left:454px;top:531.6px;color:#fff">Ln 9</span>
<span class="t" style="left:523px;top:531.6px;color:#fff">Col 1</span>
<span class="t" style="left:592px;top:531.6px;color:#fff">Ch 1</span>
<span class="t" style="left:694.4px;top:531.6px;color:#fff">INS</span>
<svg style="left:898.6px;top:533px" width="7" height="9" viewBox="0 0 7 9"><path d="M3.5 9 V1.4 M0.6 4 L3.5 1 L6.4 4" stroke="#fff" stroke-width="1.2" fill="none"/></svg>
<span class="t" style="left:913.6px;top:531.6px;color:#fff">Add to Source Control</span>
<div class="a" style="left:1007px;top:536px;width:0;height:0;border-left:2.6px solid transparent;border-right:2.6px solid transparent;border-bottom:3px solid #fff"></div>
</div>

<!--STATUS_END-->

<!-- ================= DIALOG WINDOW ================= -->
<div id="dialog">
<div class="a" style="left:237.8px;top:113.8px;width:549.2px;height:266.8px;background:#f0f0f0;box-shadow:0 0 0 0.6px #6e6e70"></div>
<div class="a" style="left:237.8px;top:113.8px;width:549.2px;height:23.5px;background:#ffffff"></div>
<svg style="left:244.2px;top:119.5px" width="11.6" height="9.3" viewBox="0 0 11 8.4" preserveAspectRatio="none"><rect x="0.3" y="0.3" width="10.4" height="7.8" fill="#eef3f6" stroke="#9aa7b0" stroke-width="0.6"/><rect x="1.2" y="1.6" width="4.2" height="5.6" fill="#2f8f7a"/><rect x="1.2" y="1.6" width="4.2" height="1.4" fill="#3a6ea5"/><path d="M6.6 2.4 H9.6 M6.6 4 H9.6 M6.6 5.6 H9.6" stroke="#9ab0c0" stroke-width="0.7"/></svg>
<span class="t" style="left:260.3px;top:118.6px;color:#000;font-size:9.2px">Untitled</span>
<div class="a" style="left:697px;top:124px;width:7.6px;height:1px;background:#222"></div>
<div class="a" style="left:731px;top:120.6px;width:8px;height:8px;border:1px solid #222"></div>
<svg style="left:764.6px;top:120.6px" width="8" height="8" viewBox="0 0 8 8"><path d="M0.3 0.3 L7.7 7.7 M7.7 0.3 L0.3 7.7" stroke="#222" stroke-width="0.9"/></svg>
<!-- Add button -->
<div class="a" style="left:291.6px;top:199.4px;width:73.6px;height:23.4px;background:#e1e1e1;border:1px solid #adadad"></div>
<span class="t" style="left:291.6px;top:204px;width:73.6px;text-align:center;color:#000;font-size:12.3px;line-height:16px;height:16px">Add</span>
<!-- ComputerName button -->
<div class="a" style="left:405px;top:201.2px;width:93.2px;height:22.6px;background:#e1e1e1;border:1px solid #adadad"></div>
<span class="t" style="left:405px;top:204.6px;width:93.2px;text-align:center;color:#000;font-size:11.8px;line-height:16px;height:16px">ComputerName</span>
</div>

<!--DIALOG_END-->

<!-- ================= ANNOTATIONS ================= -->
<svg style="left:0;top:0;filter:drop-shadow(0.6px 0.8px 0.8px rgba(60,60,60,0.45))" width="1024" height="546" viewBox="0 0 1024 546">
<rect x="269.4" y="191" width="108.6" height="38" fill="none" stroke="#ea4a48" stroke-width="2.1"/>
<rect x="397.6" y="186.6" width="123.6" height="46.2" fill="none" stroke="#ea4a48" stroke-width="2.1"/>
<path d="M268.4 206.4 L37 246" stroke="#ea4a48" stroke-width="1.9" stroke-dasharray="6.6 2.8" fill="none"/>
<path d="M30.6 247.2 L37.4 243 L38.4 248.8 Z" fill="#ea4a48"/>
<path d="M409.8 234.6 L31 318.4" stroke="#ea4a48" stroke-width="1.9" stroke-dasharray="6.6 2.8" fill="none"/>
<path d="M24.4 319.8 L31 315.4 L32.2 321.2 Z" fill="#ea4a48"/>
</svg>

<!--ARROWS_END-->

</body>
</html>
